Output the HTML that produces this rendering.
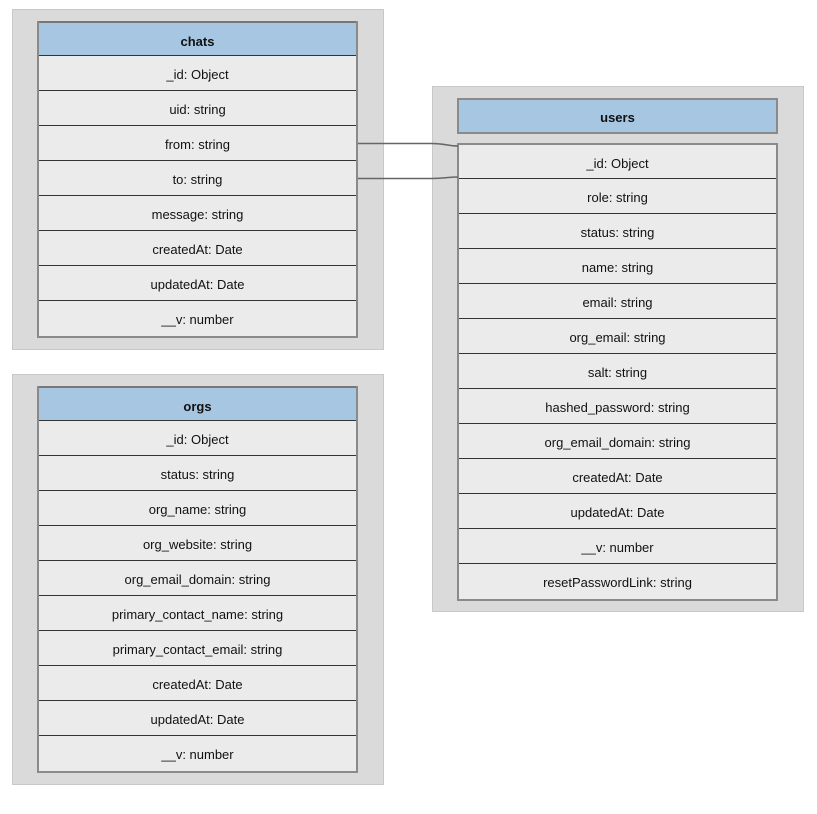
<!DOCTYPE html>
<html><head><style>
body{margin:0;width:817px;height:814px;background:#fff;position:relative;font-family:"Liberation Sans",Arial,sans-serif;font-size:13px;color:#111;overflow:hidden}
.c{position:absolute;background:#dadada;border:1px solid #c8c8c8;box-sizing:border-box}
.t{position:absolute;width:321px;box-sizing:border-box;border-left:2px solid #8a8a8a;border-right:2px solid #8a8a8a;border-bottom:2px solid #8a8a8a}
.h{height:35px;background:#a6c6e2;box-sizing:border-box;border-top:2px solid #777;border-bottom:1px solid #333;text-align:center;line-height:37px;font-weight:bold}
.r{height:35px;background:#ebebeb;box-sizing:border-box;border-bottom:1px solid #333;text-align:center;line-height:38px}
.r:last-child{border-bottom:none}
.hb{position:absolute;left:457px;top:98px;width:321px;height:36px;background:#a6c6e2;border:2px solid #8a8a8a;box-sizing:border-box;text-align:center;line-height:35px;font-weight:bold}
</style></head><body>
<div class="c" style="left:12px;top:9px;width:372px;height:341px"></div>
<div class="t" style="left:37px;top:21px">
<div class="h">chats</div>
<div class="r">_id: Object</div><div class="r">uid: string</div><div class="r">from: string</div><div class="r">to: string</div><div class="r">message: string</div><div class="r">createdAt: Date</div><div class="r">updatedAt: Date</div><div class="r">__v: number</div>
</div>

<div class="c" style="left:12px;top:374px;width:372px;height:411px"></div>
<div class="t" style="left:37px;top:386px">
<div class="h">orgs</div>
<div class="r">_id: Object</div><div class="r">status: string</div><div class="r">org_name: string</div><div class="r">org_website: string</div><div class="r">org_email_domain: string</div><div class="r">primary_contact_name: string</div><div class="r">primary_contact_email: string</div><div class="r">createdAt: Date</div><div class="r">updatedAt: Date</div><div class="r">__v: number</div>
</div>

<div class="c" style="left:432px;top:86px;width:372px;height:526px"></div>
<div class="hb">users</div>
<div class="t" style="left:457px;top:143px;border-top:2px solid #8a8a8a">
<div class="r" style="height:34px;line-height:37px">_id: Object</div><div class="r">role: string</div><div class="r">status: string</div><div class="r">name: string</div><div class="r">email: string</div><div class="r">org_email: string</div><div class="r">salt: string</div><div class="r">hashed_password: string</div><div class="r">org_email_domain: string</div><div class="r">createdAt: Date</div><div class="r">updatedAt: Date</div><div class="r">__v: number</div><div class="r">resetPasswordLink: string</div>
</div>

<svg style="position:absolute;left:0;top:0" width="817" height="814">
<path d="M358 143.5 H432 C445 143.5 448 146 458 146" fill="none" stroke="#666" stroke-width="1.5"/>
<path d="M358 178.5 H432 C445 178.5 448 177 458 177" fill="none" stroke="#666" stroke-width="1.5"/>
</svg>
</body></html>
